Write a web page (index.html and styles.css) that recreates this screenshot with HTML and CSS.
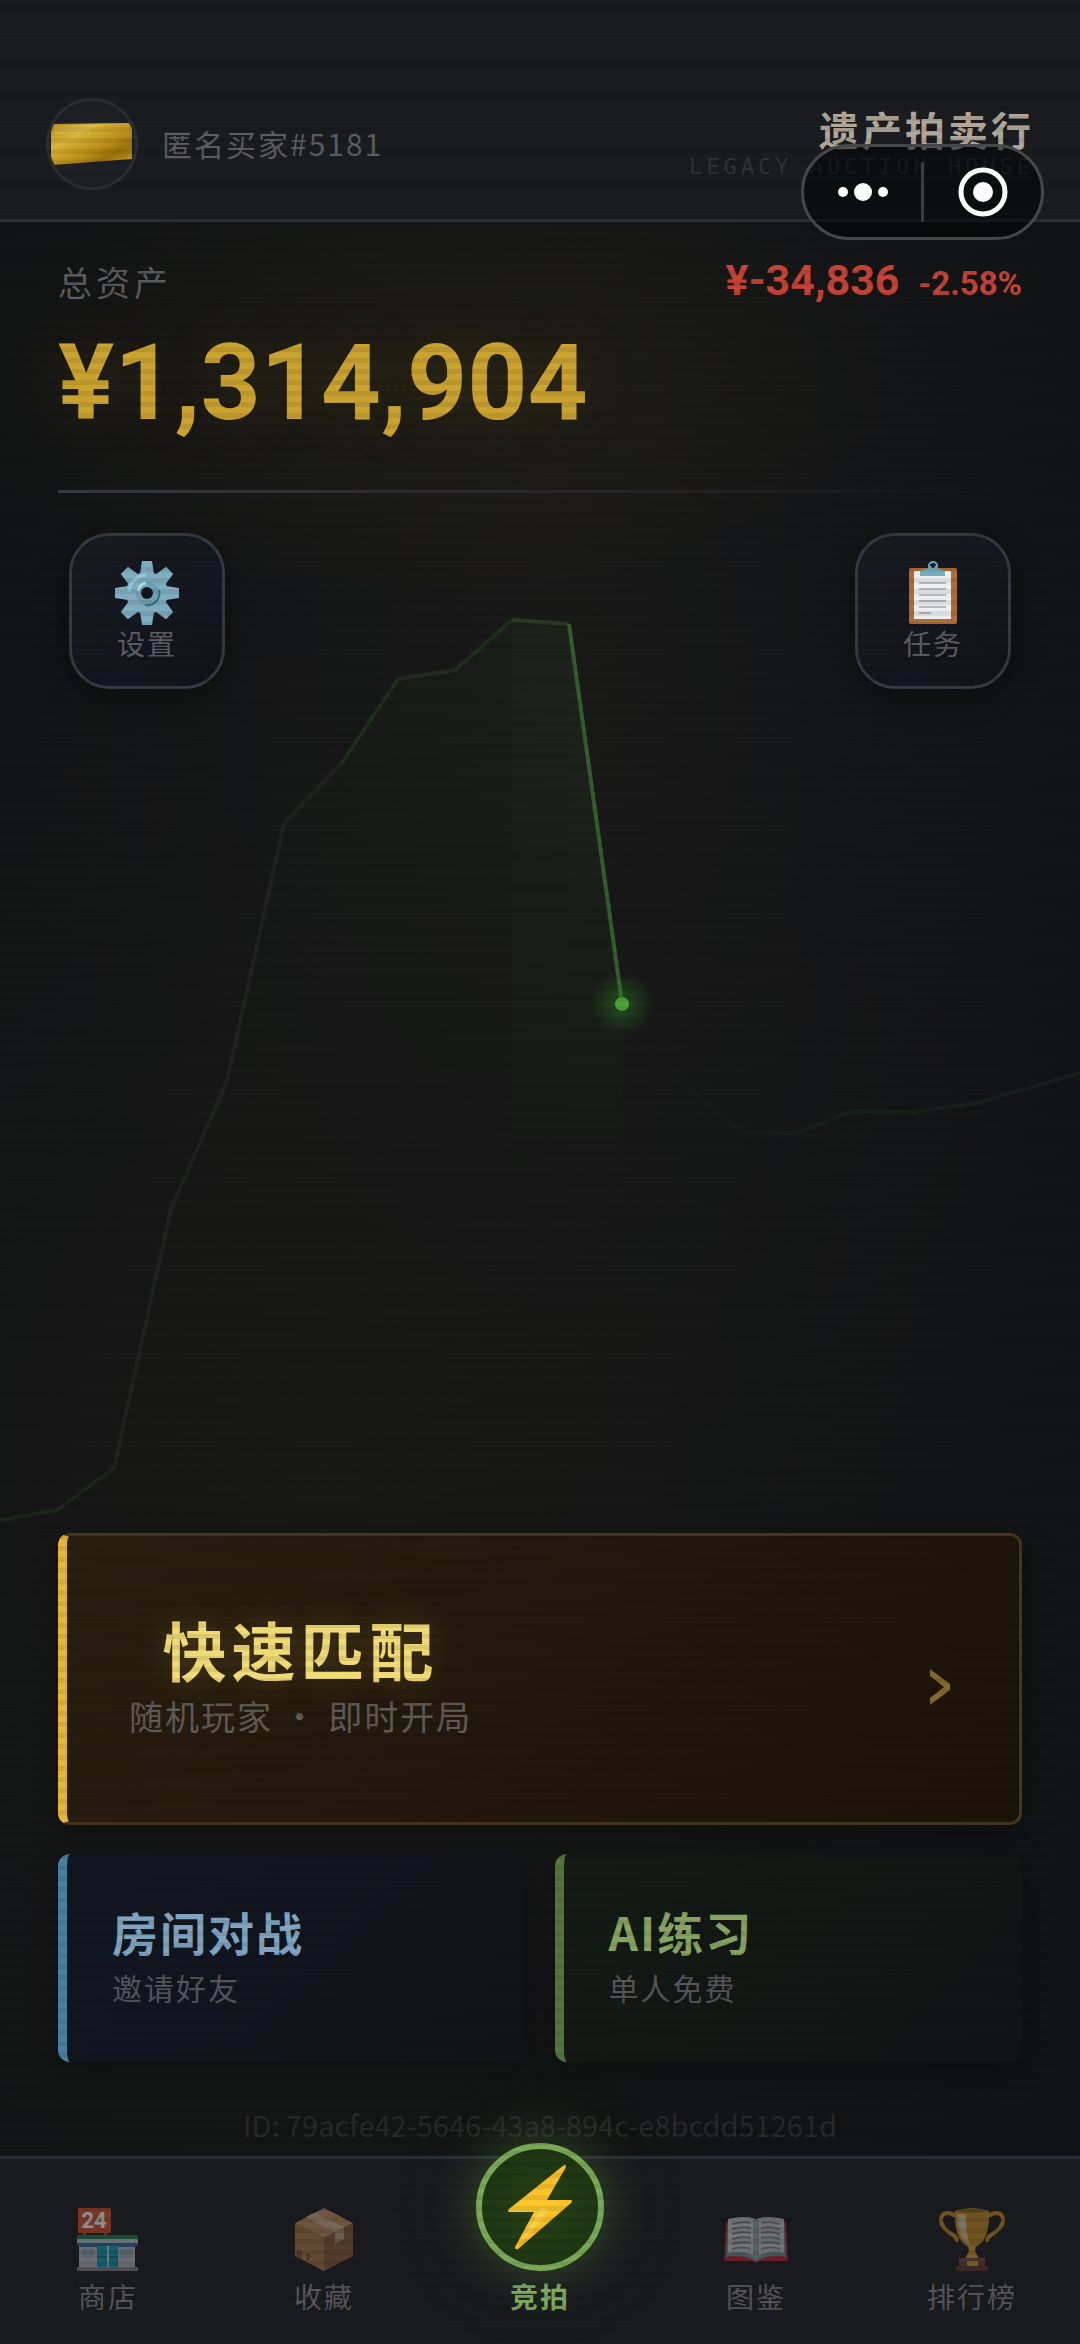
FILE: index.html
```html
<!DOCTYPE html>
<html lang="zh-CN">
<head>
    <meta charset="UTF-8">
    <meta name="viewport" content="width=device-width, initial-scale=1.0">
    <title>遗产拍卖行</title>
    <link rel="stylesheet" href="styles.css">
</head>
<body>
    <header class="header">
        <div class="user">
            <span class="avatar">
                <svg viewBox="0 0 86 86">
                    <defs>
                        <linearGradient id="gold" x1="0" y1="0" x2="1" y2="1">
                            <stop offset="0" stop-color="#b08614"/>
                            <stop offset="0.3" stop-color="#d9b53a"/>
                            <stop offset="0.6" stop-color="#b98d16"/>
                            <stop offset="0.75" stop-color="#9a700c"/>
                            <stop offset="1" stop-color="#c09a1c"/>
                        </linearGradient>
                    </defs>
                    <path d="M3 23 L80 22 L83 28 V58 L4 64 L2 61 V28 Z" fill="url(#gold)"/>
                    <path d="M5 25 L50 24 L30 32 L5 33 Z" fill="#ecd37a" opacity="0.3"/>
                </svg>
            </span>
            <span class="user-name">匿名买家#5181</span>
        </div>
        <div class="brand">
            <h1>遗产拍卖行</h1>
            <p>LEGACY AUCTION HOUSE</p>
        </div>
    </header>

    <div class="capsule">
        <button type="button" aria-label="更多">
            <svg width="50" height="24" viewBox="0 0 50 24" fill="#fff">
                <circle cx="5" cy="12" r="5"/>
                <circle cx="25" cy="12" r="9"/>
                <circle cx="45" cy="12" r="5"/>
            </svg>
        </button>
        <span class="capsule-line"></span>
        <button type="button" aria-label="关闭">
            <svg width="50" height="50" viewBox="0 0 50 50">
                <circle cx="25" cy="25" r="22" fill="none" stroke="#fff" stroke-width="5"/>
                <circle cx="25" cy="25" r="10" fill="#fff"/>
            </svg>
        </button>
    </div>

    <main class="main">
        <svg class="chart" viewBox="0 0 1080 1934" preserveAspectRatio="none">
            <defs>
                <linearGradient id="area" x1="0" y1="400" x2="0" y2="1000" gradientUnits="userSpaceOnUse">
                    <stop offset="0" stop-color="#3c8c32" stop-opacity="0.1"/>
                    <stop offset="1" stop-color="#3c8c32" stop-opacity="0"/>
                </linearGradient>
                <radialGradient id="glow">
                    <stop offset="0" stop-color="#2f8a22" stop-opacity="0.5"/>
                    <stop offset="1" stop-color="#2f8a22" stop-opacity="0"/>
                </radialGradient>
                <linearGradient id="next" x1="622" y1="0" x2="800" y2="0" gradientUnits="userSpaceOnUse">
                    <stop offset="0" stop-color="#191f1b" stop-opacity="0"/>
                    <stop offset="1" stop-color="#191f1b"/>
                </linearGradient>
            </defs>
            <path d="M0 1298 L57 1288 L114 1246 L171 987 L227 859 L284 601 L341 542 L398 457 L455 448 L512 398 V1298 Z" fill="url(#area)" opacity="0.3"/>
            <path d="M512 398 L569 402 V1200 H512 Z" fill="url(#area)" opacity="0.8"/>
            <path d="M569 402 L622 781 V1200 H569 Z" fill="url(#area)"/>
            <g class="chart-line">
                <path class="line-old" d="M0 1298 L57 1288 L114 1246 L171 987 L227 859 L284 601 L341 542"/>
                <path class="line-mid" d="M341 542 L398 457 L455 448 L512 398"/>
                <path class="line-near" d="M512 398 L569 402"/>
                <path class="line-now" d="M569 402 L622 781"/>
                <path class="line-next" d="M622 781 L682 860 L740 910 L796 911 L853 889 L912 890 L972 882 L1032 865 L1080 851" stroke="url(#next)"/>
            </g>
            <circle cx="622" cy="782" r="32" fill="url(#glow)"/>
            <circle cx="622" cy="782" r="7" fill="#4da238"/>
        </svg>

        <section class="assets">
            <div class="assets-top">
                <span class="assets-label">总资产</span>
                <span class="delta">¥-34,836 <small>-2.58%</small></span>
            </div>
            <div class="assets-total">¥1,314,904</div>
            <div class="assets-line"></div>
        </section>

        <div class="shortcuts">
            <button type="button" class="shortcut">
                <svg width="64" height="64" viewBox="0 0 64 64">
                    <g fill="#7fadc0">
                        <path id="tooth" d="M27 0 H37 L39 13 H25 Z"/>
                        <use href="#tooth" transform="rotate(45 32 32)"/>
                        <use href="#tooth" transform="rotate(90 32 32)"/>
                        <use href="#tooth" transform="rotate(135 32 32)"/>
                        <use href="#tooth" transform="rotate(180 32 32)"/>
                        <use href="#tooth" transform="rotate(225 32 32)"/>
                        <use href="#tooth" transform="rotate(270 32 32)"/>
                        <use href="#tooth" transform="rotate(315 32 32)"/>
                        <circle cx="32" cy="32" r="21"/>
                    </g>
                    <path d="M14 31 A18 18 0 0 1 31 14" fill="none" stroke="#8fcbdc" stroke-width="3"/>
                    <circle cx="32" cy="32" r="9" fill="none" stroke="#6f9fb1" stroke-width="5"/>
                    <path d="M44 29 A12 12 0 0 1 30 44" fill="none" stroke="#2f6f82" stroke-width="2"/>
                    <path d="M23 30 A10 10 0 0 1 31 22" fill="none" stroke="#a5dcea" stroke-width="3"/>
                    <circle cx="32" cy="32" r="6" fill="#12141c"/>
                </svg>
                <span>设置</span>
            </button>
            <button type="button" class="shortcut">
                <svg width="64" height="64" viewBox="0 0 64 64">
                    <rect x="8" y="7" width="48" height="56" rx="2" fill="#b06c35"/>
                    <path d="M13 10 H50 V58 H13 Z" fill="#eceef0"/>
                    <path d="M18 22 H45 M18 28 H45 M18 34 H45 M18 40 H45 M18 46 H45 M18 52 H30" stroke="#b2b8bc" stroke-width="2"/>
                    <circle cx="32" cy="5" r="4" fill="none" stroke="#6aa6b8" stroke-width="2"/>
                    <path d="M19 15 V11 Q20 9 26 8 Q28 7 28 5 H36 Q36 7 38 8 Q43 9 44 11 V15 Z" fill="#75adbe"/>
                    <circle cx="32" cy="5" r="2" fill="#182028"/>
                </svg>
                <span>任务</span>
            </button>
        </div>

        <section class="modes">
            <button type="button" class="mode mode-match">
                <span class="mode-text">
                    <strong>快速匹配</strong>
                    <span>随机玩家 · 即时开局</span>
                </span>
                <svg width="22" height="36" viewBox="0 0 22 36">
                    <path d="M1 0 L21 15 V21 L1 36 V29 L15 18 L1 7 Z" fill="#84692c"/>
                </svg>
            </button>
            <button type="button" class="mode mode-room">
                <strong>房间对战</strong>
                <span>邀请好友</span>
            </button>
            <button type="button" class="mode mode-ai">
                <strong>AI练习</strong>
                <span>单人免费</span>
            </button>
        </section>

        <p class="user-id">ID: 79acfe42-5646-43a8-894c-e8bcdd51261d</p>
    </main>

    <nav class="tabs">
        <a href="#shop" class="tab">
            <svg width="64" height="64" viewBox="0 0 64 64">
                <path d="M7 24 H10 V30 H7 Z M28 24 H31 V30 H28 Z" fill="#a34a2c"/>
                <rect x="2" y="1" width="33" height="25" rx="1" fill="#d9532f"/>
                <text x="18" y="21" class="shop-sign">24</text>
                <rect x="3" y="38" width="56" height="22" fill="#b9bcbf"/>
                <path d="M1 33 H62 V38 L59 40 H4 L1 38 Z" fill="#2f62a8"/>
                <path d="M1 31 H62 V36 H1 Z" fill="#c5d8dc"/>
                <path d="M1 28 H62 V32 H1 Z" fill="#1c7a4a"/>
                <path d="M6 42 H18 V51 H6 Z M44 42 H56 V51 H44 Z" fill="#8fb3c0"/>
                <path d="M21 39 H42 V60 H21 Z" fill="#10a0b8"/>
                <path d="M21 49 H42 V51 H21 Z" fill="#11766d"/>
                <path d="M31 39 H33 V60 H31 Z" fill="#b9d8de"/>
                <path d="M1 60 H62 V64 H1 Z" fill="#7d8083"/>
            </svg>
            <span>商店</span>
        </a>
        <a href="#collection" class="tab">
            <svg width="64" height="64" viewBox="0 0 64 64">
                <path d="M3 16 L32 1 L61 16 L32 31 Z" fill="#c38f62"/>
                <path d="M3 16 L32 31 V64 L3 49 Z" fill="#ad7748"/>
                <path d="M61 16 L32 31 V64 L61 49 Z" fill="#8d5b35"/>
                <path d="M14 10 L22 6 L52 20 L43 25 Z" fill="#cfb496"/>
                <path d="M43 25 L52 20 V32 L48 34 L43 37 Z" fill="#b19a83"/>
                <path d="M6 43 V49 M9 44 V50 M5 49 L10 52 M14 47 L19 50 M16 48 V54" stroke="#7a5030" stroke-width="2"/>
            </svg>
            <span>收藏</span>
        </a>
        <a href="#auction" class="tab tab-active">
            <span class="tab-round">
                <svg width="66" height="86" viewBox="0 0 66 86">
                    <defs>
                        <linearGradient id="bolt" x1="0" y1="0" x2="0.3" y2="1">
                            <stop offset="0" stop-color="#f7ac1a"/>
                            <stop offset="0.5" stop-color="#fcc72a"/>
                            <stop offset="1" stop-color="#f6b820"/>
                        </linearGradient>
                    </defs>
                    <path d="M57 1 Q59 0 59 3 L40 36 H64 Q66 37 64 39 L11 85 Q8 86 8 83 L27 48 H2 Q0 47 2 45 Z" fill="url(#bolt)"/>
                    <path d="M12 80 L34 44 L40 43 L36 54 Z" fill="#fbd75a" opacity="0.7"/>
                </svg>
            </span>
            <span>竞拍</span>
        </a>
        <a href="#book" class="tab">
            <svg width="64" height="64" viewBox="0 0 64 64">
                <path d="M2 15 L0 54 H28 L32 56 L36 54 H64 L62 15 Z" fill="#b8232d"/>
                <path d="M4 13 L2 50 Q20 46 32 55 Q44 46 62 50 L60 13 Z" fill="#6f97a5"/>
                <path d="M4 12 Q22 8 32 12 V50 Q20 43 4 46 Z" fill="#cfd2d4"/>
                <path d="M60 12 Q42 8 32 12 V50 Q44 43 60 46 Z" fill="#c6cacd"/>
                <path d="M29 12 H35 V50 L32 52 L29 50 Z" fill="#93a6ae"/>
                <path d="M8 17 Q18 14 27 16 M8 22 Q18 19 27 21 M8 27 Q18 24 27 26 M8 32 Q18 29 27 31 M8 37 Q18 34 27 36 M8 42 Q18 39 27 42 M37 16 Q47 14 56 17 M37 21 Q47 19 56 22 M37 26 Q47 24 56 27 M37 31 Q47 29 56 32 M37 36 Q47 34 56 37 M37 42 Q47 39 56 42" fill="none" stroke="#7d8287" stroke-width="2"/>
            </svg>
            <span>图鉴</span>
        </a>
        <a href="#rank" class="tab">
            <svg width="66" height="64" viewBox="0 0 66 64">
                <path d="M17 9 Q4 2 2 12 Q1 20 14 28 Q19 31 17 35 M49 9 Q62 2 64 12 Q65 20 52 28 Q47 31 49 35" fill="none" stroke="#c58c1c" stroke-width="4"/>
                <path d="M16 4 Q33 -2 50 4 Q51 32 38 39 L33 41 L28 39 Q15 32 16 4 Z" fill="#c68d1f"/>
                <path d="M18 7 H27 Q27 28 31 38 Q18 32 18 7 Z" fill="#e6bf6b"/>
                <path d="M20 9 Q23 8 26 9 Q26 24 28 32 Q20 24 20 9 Z" fill="#d9cfb4"/>
                <path d="M17 4 Q33 0 49 4 Q33 8 17 4 Z" fill="#8e6414"/>
                <path d="M29 39 H37 L36 44 L40 52 H26 L30 44 Z" fill="#d29d2e"/>
                <path d="M20 51 H46 V59 H20 Z" fill="#75463a"/>
                <path d="M17 59 H49 V64 H17 Z" fill="#5c352e"/>
                <path d="M28 54 H39 V59 H28 Z" fill="#d8a81c"/>
            </svg>
            <span>排行榜</span>
        </a>
    </nav>
</body>
</html>
```
FILE: styles.css
```css
* {
    box-sizing: border-box;
}
body {
    margin: 0;
    min-height: 100vh;
    display: flex;
    flex-direction: column;
    position: relative;
    font-family: "Noto Sans CJK SC", sans-serif;
    color: #5c5d62;
    background-color: #101214;
}
/* scanlines over the whole screen */
body::after {
    content: "";
    position: absolute;
    inset: 0;
    z-index: 5;
    pointer-events: none;
    background: repeating-linear-gradient(rgba(0,0,0,0) 0 6px, rgba(0,0,0,0.08) 6px 11px);
}
h1, p {
    margin: 0;
}
button {
    font-family: inherit;
    color: inherit;
    padding: 0;
    border: none;
    background: none;
    cursor: pointer;
}
.header {
    display: flex;
    justify-content: space-between;
    align-items: center;
    padding: 98px 46px 29px;
    background-color: #1b1c20;
    border-bottom: 3px solid #2c2d35;
}
.user {
    display: flex;
    align-items: center;
    gap: 24px;
}
.avatar {
    width: 92px;
    height: 92px;
    border: 3px solid #2c2f35;
    border-radius: 50%;
    background-color: #1d2126;
    overflow: hidden;
}
.avatar svg {
    display: block;
}
.user-name {
    font-size: 30px;
    line-height: 40px;
    letter-spacing: 2px;
    padding-bottom: 2px;
}
.brand {
    text-align: right;
}
.brand h1 {
    font-size: 40px;
    line-height: 46px;
    letter-spacing: 3px;
    color: #b1a797;
}
.brand p {
    font-family: "DejaVu Sans Mono", monospace;
    font-size: 22px;
    line-height: 30px;
    letter-spacing: 4px;
    color: #323338;
}
.capsule {
    position: absolute;
    top: 144px;
    right: 36px;
    z-index: 10;
    width: 243px;
    height: 96px;
    display: flex;
    align-items: center;
    border: 3px solid #464749;
    border-radius: 48px;
    background-color: rgba(0,0,0,0.5);
}
.capsule button {
    flex: 1;
    display: flex;
    justify-content: center;
}
.capsule-line {
    width: 3px;
    height: 60px;
    background-color: #3c3d3f;
}
.main {
    flex: 1;
    display: flex;
    flex-direction: column;
    position: relative;
    padding: 28px 58px 10px;
    background:
        radial-gradient(ellipse 50% 12% at 38% 8%, rgba(60,50,10,0.2), rgba(60,50,10,0)),
        radial-gradient(ellipse 75% 55% at 30% 65%, #191917, rgba(25,25,23,0)),
        radial-gradient(ellipse 50% 50% at 52% 25%, #1a1a1a, rgba(26,26,26,0)),
        #111315;
}
.chart {
    position: absolute;
    top: 0;
    left: 0;
    width: 100%;
    height: 100%;
}
.chart-line {
    fill: none;
    stroke-width: 4;
}
.line-old {
    stroke: #1e251d;
}
.line-mid {
    stroke: #202e1d;
}
.line-near {
    stroke: #263d22;
}
.line-now {
    stroke: #32602b;
}
.assets, .shortcuts, .modes, .user-id {
    position: relative;
}
.assets-top {
    display: flex;
    justify-content: space-between;
    align-items: center;
    line-height: 60px;
}
.assets-label {
    font-size: 34px;
    letter-spacing: 4px;
}
.delta {
    font-family: Roboto, sans-serif;
    font-size: 43px;
    font-weight: bold;
    color: #c64335;
}
.delta small {
    font-size: 33px;
    margin-left: 8px;
}
.assets-total {
    margin-top: 10px;
    font-family: Roboto, sans-serif;
    font-size: 105px;
    font-weight: bold;
    line-height: 120px;
    color: #caa22f;
    text-shadow: 0 0 60px rgba(212,170,40,0.15);
}
.assets-line {
    height: 3px;
    margin-top: 46px;
    background: linear-gradient(90deg, #3d3d46, #2a2a2d 50%, rgba(42,42,45,0));
}
.shortcuts {
    display: flex;
    justify-content: space-between;
    margin-top: 40px;
    padding: 0 11px;
}
.shortcut {
    width: 156px;
    height: 156px;
    display: flex;
    flex-direction: column;
    align-items: center;
    padding-top: 25px;
    border: 3px solid #373943;
    border-radius: 40px;
    background: linear-gradient(145deg, #191b23, #12131a);
    box-shadow: 0 8px 30px rgba(0,0,0,0.4);
}
.shortcut span {
    font-size: 28px;
    line-height: 36px;
    letter-spacing: 2px;
}
.modes {
    margin-top: auto;
    display: grid;
    grid-template-columns: 1fr 1fr;
    gap: 29px;
}
.mode {
    display: flex;
    flex-direction: column;
    justify-content: center;
    align-items: flex-start;
    height: 208px;
    padding: 0 46px 2px 45px;
    border-left: 9px solid;
    border-radius: 12px;
    box-shadow: 0 8px 30px rgba(0,0,0,0.3);
}
.mode strong {
    font-size: 46px;
    line-height: 60px;
    letter-spacing: 2px;
}
.mode span {
    font-size: 30px;
    line-height: 52px;
    letter-spacing: 2px;
    color: #55565b;
}
.mode-match {
    grid-column: 1 / 3;
    flex-direction: row;
    justify-content: space-between;
    align-items: center;
    height: 292px;
    padding: 0 68px 0 62px;
    border: 3px solid #47371e;
    border-left: 9px solid #e6b737;
    background: linear-gradient(135deg, #291f10, #1b1308);
}
.mode-match .mode-text {
    display: flex;
    flex-direction: column;
    align-items: center;
}
.mode-match strong {
    font-size: 64px;
    line-height: 74px;
    letter-spacing: 5px;
    color: #f0da75;
    text-shadow: 0 0 30px rgba(240,210,90,0.2);
}
.mode-match .mode-text span {
    font-size: 34px;
    line-height: 62px;
    color: #605b57;
}
.mode-match svg {
    margin-top: 16px;
}
.mode-room {
    border-left-color: #4a7f9e;
    background: linear-gradient(135deg, #111722, #111317);
}
.mode-room strong {
    color: #7fa3c0;
}
.mode-ai {
    border-left-color: #52763b;
    background: linear-gradient(135deg, #141b14, #111315);
}
.mode-ai strong {
    color: #86a361;
}
.user-id {
    margin-top: 40px;
    font-size: 29px;
    line-height: 44px;
    text-align: center;
    color: #292929;
}
.tabs {
    position: relative;
    display: grid;
    grid-template-columns: repeat(5, 1fr);
    padding: 48px 0 29px;
    background-color: #1a1b1f;
    border-top: 3px solid #2b2d36;
}
.tab {
    display: flex;
    flex-direction: column;
    align-items: center;
    gap: 6px;
    font-size: 28px;
    line-height: 38px;
    letter-spacing: 2px;
    color: #55565c;
    text-decoration: none;
}
.tab > svg {
    opacity: 0.5;
}
.shop-sign {
    font-family: Roboto, sans-serif;
    font-size: 22px;
    font-weight: bold;
    letter-spacing: 0;
    text-anchor: middle;
    fill: #fff;
}
.tab-active {
    font-weight: bold;
    color: #7daa5c;
}
.tab-round {
    width: 128px;
    height: 128px;
    margin-top: -64px;
    display: flex;
    justify-content: center;
    align-items: center;
    border: 6px solid #79a957;
    border-radius: 50%;
    background: radial-gradient(circle, #264216, #1c3212);
    box-shadow: 0 0 50px rgba(90,150,60,0.4), 0 0 100px rgba(60,130,60,0.12);
}
```
